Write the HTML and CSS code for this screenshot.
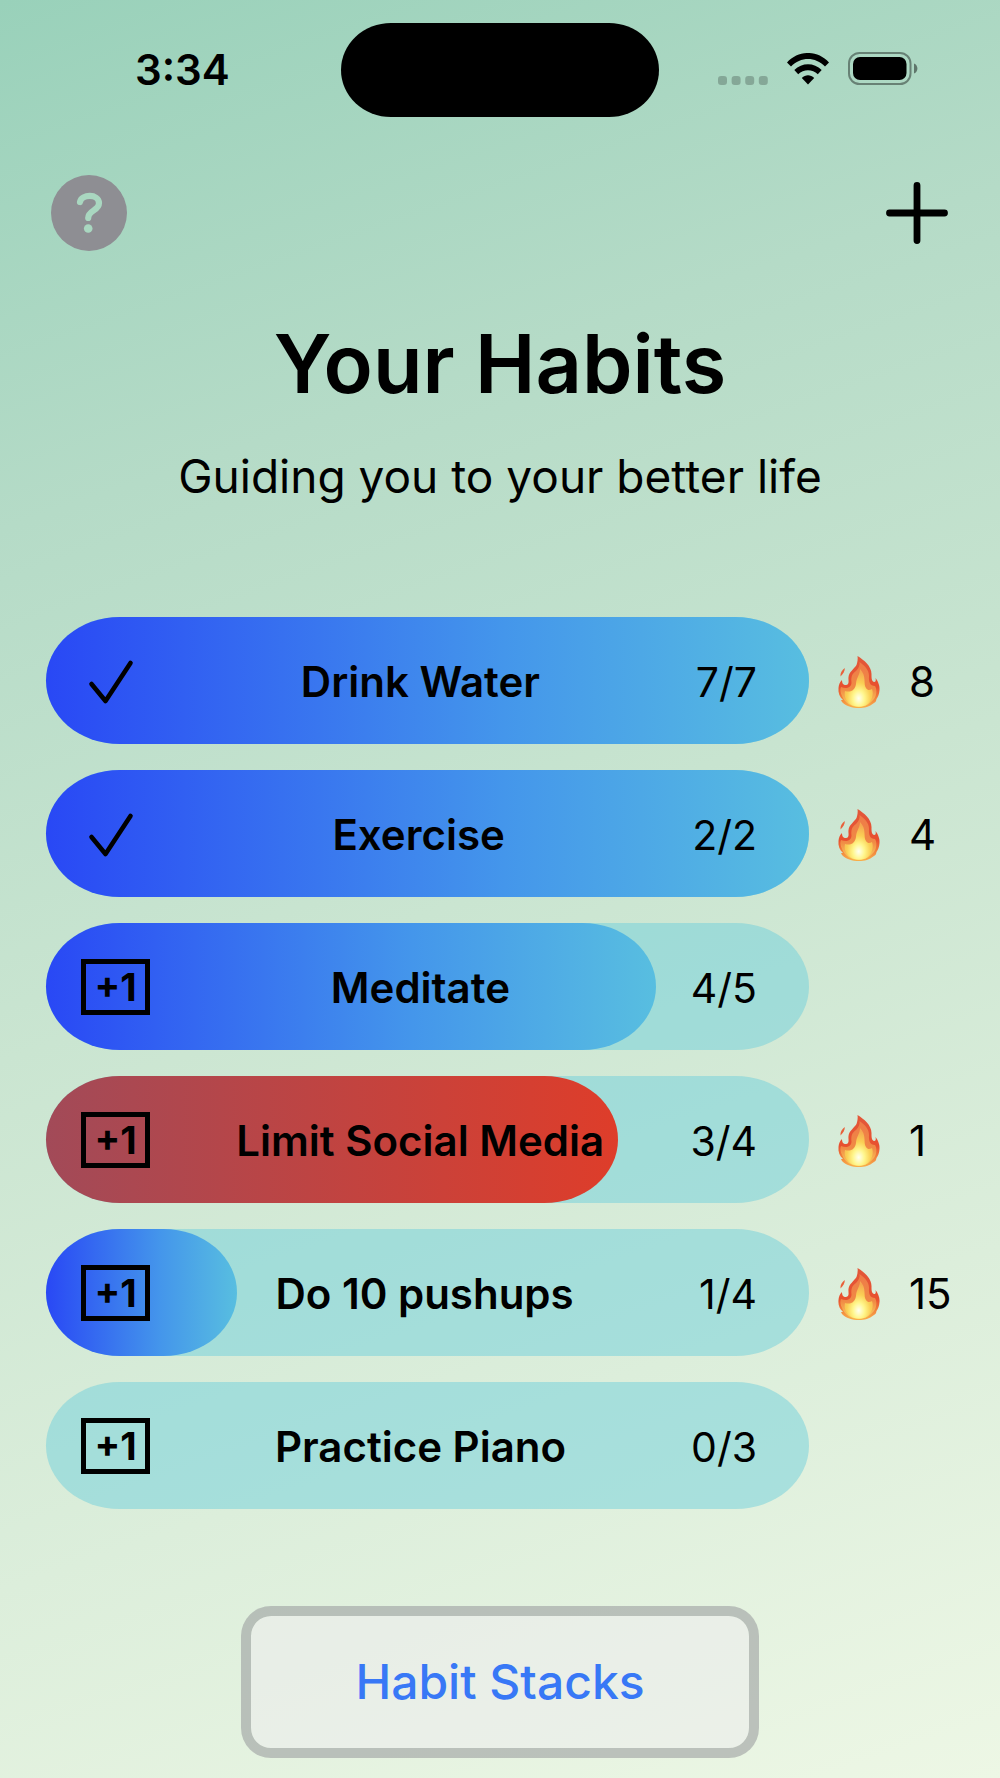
FILE: index.html
```html
<!DOCTYPE html>
<html lang="en">
<head>
<meta charset="utf-8">
<meta name="viewport" content="width=device-width, initial-scale=1">
<title>Your Habits</title>
<link rel="stylesheet" href="styles.css">
</head>
<body>
<svg class="defs" width="0" height="0" aria-hidden="true">
  <defs>
    <linearGradient id="flame-outer" x1="0" y1="0" x2="0" y2="1">
      <stop offset="0" stop-color="#e2583a"/>
      <stop offset="0.6" stop-color="#e8502f"/>
      <stop offset="1" stop-color="#f9b04a"/>
    </linearGradient>
    <linearGradient id="flame-mid" x1="0" y1="0" x2="0" y2="1">
      <stop offset="0" stop-color="#ee7a48"/>
      <stop offset="0.6" stop-color="#f08a45"/>
      <stop offset="1" stop-color="#fcd35c"/>
    </linearGradient>
    <radialGradient id="flame-core" cx="0.5" cy="0.78" r="0.7">
      <stop offset="0" stop-color="#fffff0"/>
      <stop offset="0.3" stop-color="#fff68c"/>
      <stop offset="0.6" stop-color="#fad055"/>
      <stop offset="1" stop-color="#f4a850"/>
    </radialGradient>
    <symbol id="flame" viewBox="0 0 42 52">
      <path fill="url(#flame-outer)" d="M19.500 0C26 4 33.500 10 33.500 18C33.500 22 33.500 25 36 26C38 26 38 24 37.500 22C40 25 42 30 41.500 34C41.300 38 40 41 38.500 43C38 44.500 38.500 45.500 36 47C31 51 27 52 21 52C14 52 8 50 4 46L3 44L5 44C1.500 41 0 37 .5 32C.8 29 1.500 26 4 24C4 27 5 29 8 29C12 28.500 10 24 10.500 21C11 16 16 13 18.500 9C19.500 6 20 3 19.500 0Z"/>
      <path fill="#e8603a" d="M6.800 12C7 15 5 18 2.500 20.500C2 17 4 14 6.800 12Z"/>
      <path fill="url(#flame-mid)" d="M21.500 6C27 10 31 14 31 20C30.500 26 32 30 37 30C39 33 39 39 36 43C31 49 26 51 21 51C13 51 7 47 4 40C2 36 2 33 3 31C8 33 13 32 13.500 27C13 20 14 18 18 15C21 12 22 9 21.500 6Z"/>
      <path fill="url(#flame-core)" d="M22 13C29 20 25 28 28 32C30 35 32 34 34 33C36 38 34 45 29 48.500C26 51 17 52 12 48C7 44 6 39 7 35C13 37 17 34 18 28C18 22 22 19 22 13Z"/>
    </symbol>
    <symbol id="check" viewBox="0 0 52 52">
      <path fill="none" stroke="#000" stroke-width="4.600" stroke-linecap="round" stroke-linejoin="round" d="M6.500 29L20.500 46L45.500 8"/>
    </symbol>
  </defs>
</svg>
<div class="app">
  <header class="status-bar">
    <time class="clock">3:34</time>
    <span class="island"></span>
    <div class="status-icons">
      <svg width="50" height="34" viewBox="0 0 50 34" aria-label="No signal">
        <g fill="#000" fill-opacity="0.22">
          <rect x="0" y="24" width="9" height="9" rx="3"/>
          <rect x="13.600" y="24" width="9" height="9" rx="3"/>
          <rect x="27.200" y="24" width="9" height="9" rx="3"/>
          <rect x="40.800" y="24" width="9" height="9" rx="3"/>
        </g>
      </svg>
      <svg width="42" height="32" viewBox="0 0 42 32" aria-label="Wi-Fi">
        <path d="M0 9.500C11.500-3.200 30.500-3.200 42 9.500L38 13.500C28.500 3.500 13.500 3.500 4 13.500Z"/>
        <path d="M7.300 17C15 9.200 27 9.200 34.700 17L30.800 21.200C25.500 15.800 16.500 15.800 11.200 21.200Z"/>
        <path d="M14.800 25C18.500 21.200 23.500 21.200 27.200 25L21 31.500Z"/>
      </svg>
      <svg width="70" height="34" viewBox="0 0 70 34" aria-label="Battery full">
        <rect x="1" y="1" width="61.500" height="31" rx="10.500" fill="none" stroke="#000" stroke-opacity="0.400" stroke-width="2"/>
        <rect x="5" y="5" width="53.500" height="23" rx="7"/>
        <path fill-opacity="0.450" d="M66 11.500C70.500 13 70.500 20 66 21.500Z"/>
      </svg>
    </div>
  </header>

  <nav class="toolbar">
    <button class="icon-button" type="button" aria-label="Help">
      <svg width="76" height="76" viewBox="0 0 76 76">
        <circle cx="38" cy="38" r="38" fill="#8e8e93"/>
        <path fill="none" stroke="#a9d7c0" stroke-width="6.200" stroke-linecap="round" stroke-linejoin="round" d="M29 27C30.500 19 47.500 18.500 48 28C48 36 37.200 35 37.200 43"/>
        <circle cx="37.200" cy="53.500" r="4.300" fill="#a9d7c0"/>
      </svg>
    </button>
    <button class="icon-button" type="button" aria-label="Add habit">
      <svg width="62" height="62" viewBox="0 0 62 62">
        <path fill="none" stroke="#000" stroke-width="6.800" stroke-linecap="round" d="M31 3.500V58.500M3.500 31H58.500"/>
      </svg>
    </button>
  </nav>

  <main>
    <h1 class="title">Your Habits</h1>
    <p class="subtitle">Guiding you to your better life</p>

    <ul class="habits">
      <li class="habit">
        <div class="bar">
          <div class="fill" style="width: 100%"></div>
          <svg class="check" width="52" height="52" aria-label="Done"><use href="#check"/></svg>
          <span class="name">Drink Water</span>
          <span class="count">7/7</span>
        </div>
        <div class="streak"><svg width="42" height="52" aria-label="Streak"><use href="#flame"/></svg><span>8</span></div>
      </li>
      <li class="habit">
        <div class="bar">
          <div class="fill" style="width: 100%"></div>
          <svg class="check" width="52" height="52" aria-label="Done"><use href="#check"/></svg>
          <span class="name">Exercise</span>
          <span class="count">2/2</span>
        </div>
        <div class="streak"><svg width="42" height="52" aria-label="Streak"><use href="#flame"/></svg><span>4</span></div>
      </li>
      <li class="habit">
        <div class="bar">
          <div class="fill" style="width: 80%"></div>
          <button class="plus-one" type="button">+1</button>
          <span class="name">Meditate</span>
          <span class="count">4/5</span>
        </div>
        <div class="streak"></div>
      </li>
      <li class="habit">
        <div class="bar">
          <div class="fill limit" style="width: 75%"></div>
          <button class="plus-one" type="button">+1</button>
          <span class="name">Limit Social Media</span>
          <span class="count">3/4</span>
        </div>
        <div class="streak"><svg width="42" height="52" aria-label="Streak"><use href="#flame"/></svg><span>1</span></div>
      </li>
      <li class="habit">
        <div class="bar">
          <div class="fill" style="width: 25%"></div>
          <button class="plus-one" type="button">+1</button>
          <span class="name">Do 10 pushups</span>
          <span class="count">1/4</span>
        </div>
        <div class="streak"><svg width="42" height="52" aria-label="Streak"><use href="#flame"/></svg><span>15</span></div>
      </li>
      <li class="habit">
        <div class="bar">
          <button class="plus-one" type="button">+1</button>
          <span class="name">Practice Piano</span>
          <span class="count">0/3</span>
        </div>
        <div class="streak"></div>
      </li>
    </ul>

    <button class="stacks" type="button">Habit Stacks</button>
  </main>
</div>
</body>
</html>
```
FILE: styles.css
```css
* {
  box-sizing: border-box;
}

body {
  margin: 0;
  font-family: Inter, "Liberation Sans", sans-serif;
  color: #000;
}

button {
  font: inherit;
  color: inherit;
  padding: 0;
  border: 0;
  background: none;
  cursor: pointer;
}

svg {
  display: block;
  flex: none;
}

.defs {
  position: absolute;
}

.app {
  min-height: 100vh;
  padding: 23px 46px 20px;
  background: linear-gradient(161deg, #99d1ba, #b5dbc7 25%, #cae5d1 50%, #dceedb 75%, #edf7e5);
}

.status-bar {
  display: grid;
  grid-template-columns: 1fr 318px 1fr;
  align-items: center;
}

.clock {
  padding-left: 89px;
  font-size: 42px;
  line-height: 52px;
  font-weight: 600;
}

.island {
  height: 94px;
  border-radius: 50px / 47px;
  background: #000;
}

.status-icons {
  display: flex;
  justify-content: flex-end;
  align-items: center;
  gap: 19px;
  padding: 0 36px 3px 0;
}

.toolbar {
  display: flex;
  justify-content: space-between;
  align-items: center;
  margin-top: 58px;
  padding: 0 6px 0 5px;
}

.title {
  margin: 65px 0 0;
  font-size: 81px;
  line-height: 96px;
  font-weight: 600;
  text-align: center;
}

.subtitle {
  margin: 36px 0 0;
  font-size: 46px;
  line-height: 56px;
  text-align: center;
}

.habits {
  display: flex;
  flex-direction: column;
  gap: 26px;
  margin: 113px 0 0;
  padding: 0;
  list-style: none;
}

.habit {
  display: flex;
  align-items: center;
}

.bar {
  position: relative;
  flex: 1;
  display: flex;
  align-items: center;
  justify-content: space-between;
  height: 127px;
  padding: 0 52px 0 35px;
  border-radius: 74px / 64px;
  background: rgba(111, 208, 220, 0.5);
  font-size: 42px;
  line-height: 52px;
}

.bar > * {
  position: relative;
}

.bar > .fill {
  position: absolute;
  top: 0;
  bottom: 0;
  left: 0;
  border-radius: 74px / 64px;
  background: linear-gradient(90deg, #2948f5, #4496eb 60%, #58bee0);
}

.bar > .limit {
  background: linear-gradient(90deg, #a24a58, #de3d2a);
}

.check {
  margin: 0 8px 0 4px;
}

.plus-one {
  width: 69px;
  height: 56px;
  border: 5px solid #000;
  font-size: 38px;
  line-height: 46px;
  font-weight: 700;
}

.name {
  padding-top: 2px;
  font-weight: 600;
}

.count {
  padding-top: 2px;
  font-size: 41px;
}

.streak {
  display: flex;
  align-items: center;
  gap: 29px;
  width: 145px;
  padding: 2px 0 0 29px;
  font-size: 42px;
  line-height: 52px;
}

.stacks {
  display: block;
  min-width: 518px;
  margin: 97px auto 0;
  padding: 36px 40px;
  border: 10px solid rgba(142, 142, 147, 0.5);
  border-radius: 30px;
  background: rgba(236, 237, 236, 0.6) padding-box;
  color: #3878f6;
  font-size: 48px;
  line-height: 60px;
  font-weight: 500;
}
```
